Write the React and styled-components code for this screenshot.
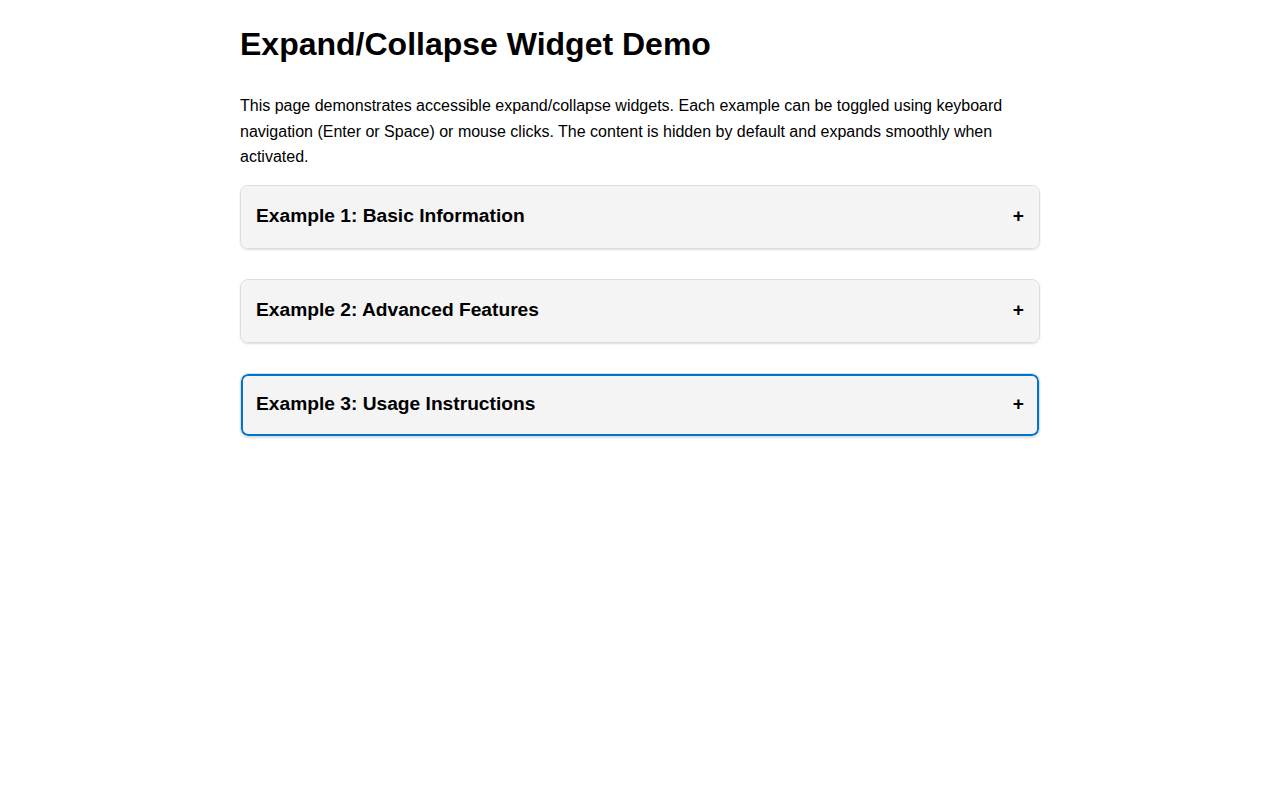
import React, { useState } from "react";
import styled, { createGlobalStyle } from "styled-components";

const Global = createGlobalStyle`
  html, body { margin: 0; padding: 0; background: #fff; }
  body {
    font-family: "Liberation Sans", Arial, sans-serif;
    color: #000;
    line-height: 1.6;
  }
`;

const Page = styled.main`
  max-width: 800px;
  margin: 0 auto;
  padding: 25px 0 20px;
`;

const Title = styled.h1`
  font-size: 32px;
  line-height: 1.2;
  font-weight: 700;
  margin: 0 0 30px;
`;

const Intro = styled.p`
  font-size: 16px;
  line-height: 25.5px;
  margin: 0 0 15px;
`;

const Item = styled.section`
  border: 1px solid #ddd;
  border-radius: 8px;
  margin-bottom: 30px;
  box-shadow: 0 1px 2px rgba(0, 0, 0, 0.14);
  overflow: hidden;
`;

const Header = styled.button`
  display: flex;
  width: 100%;
  align-items: center;
  justify-content: space-between;
  padding: 15px 15px 17px;
  border: none;
  border-radius: 7px;
  background: #f4f4f4;
  font-family: inherit;
  font-size: 19.2px;
  line-height: 30px;
  font-weight: 700;
  color: #000;
  text-align: left;
  cursor: pointer;
  outline: ${(p) => (p.$focused ? "2px solid #0074cc" : "none")};
  outline-offset: -2px;
`;

const Sign = styled.span`
  font-size: 19.2px;
  font-weight: 700;
`;

const Body = styled.div`
  padding: 16px;
  font-size: 16px;
`;

const items = [
  { title: "Example 1: Basic Information", body: "Basic information content." },
  { title: "Example 2: Advanced Features", body: "Advanced features content." },
  { title: "Example 3: Usage Instructions", body: "Usage instructions content." },
];

export default function App() {
  const [open, setOpen] = useState({});
  return (
    <>
      <Global />
      <Page>
        <Title>Expand/Collapse Widget Demo</Title>
        <Intro>
          This page demonstrates accessible expand/collapse widgets. Each example can be toggled using keyboard
          navigation (Enter or Space) or mouse clicks. The content is hidden by default and expands smoothly when
          activated.
        </Intro>
        {items.map((it, i) => (
          <Item key={i}>
            <Header
              $focused={i === 2}
              aria-expanded={!!open[i]}
              onClick={() => setOpen((o) => ({ ...o, [i]: !o[i] }))}
            >
              <span>{it.title}</span>
              <Sign>{open[i] ? "−" : "+"}</Sign>
            </Header>
            {open[i] && <Body>{it.body}</Body>}
          </Item>
        ))}
      </Page>
    </>
  );
}
